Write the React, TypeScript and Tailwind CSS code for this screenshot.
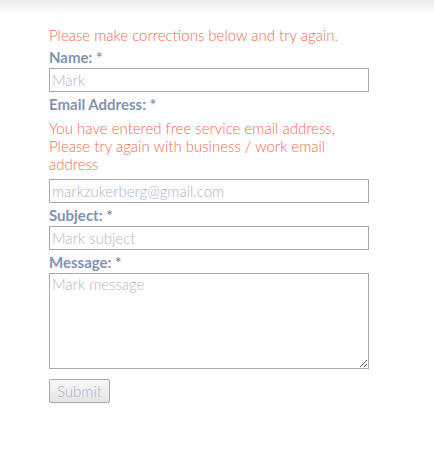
import React from "react";

export default function App() {
  const label = "text-[15px] font-bold text-[#8192b3] leading-[18px] h-[18px]";
  const input =
    "block w-[320px] h-[24px] border border-[#a9a9a9] bg-white px-[2px] text-[15px] font-light text-[#a8b3cf] placeholder:text-[#adb8d3] outline-none";
  return (
    <div className="w-[434px] h-[454px] bg-white relative" style={{ fontFamily: "Lato, 'Noto Sans', sans-serif" }}>
      <div className="absolute top-0 left-0 right-0 h-[14px] bg-gradient-to-b from-[#ececec] to-white" />
      <div className="relative pl-[49px] pt-[26px] flex flex-col">
        <p className="text-[15px] font-light leading-[18px] text-[#f36b52]">Please make corrections below and try again.</p>
        <div className={`${label} mt-[4px]`}>Name: *</div>
        <input className={`${input} mt-[2px]`} placeholder="Mark" />
        <div className={`${label} mt-[3px]`}>Email Address: *</div>
        <p className="text-[15px] font-light leading-[18px] text-[#f36b52] w-[320px] mt-[6px]">
          You have entered free service email address, Please try again with business / work email address
        </p>
        <input className={`${input} mt-[6px]`} defaultValue="markzukerberg@gmail.com" />
        <div className={`${label} mt-[3px]`}>Subject: *</div>
        <input className={`${input} mt-[2px]`} placeholder="Mark subject" />
        <div className={`${label} mt-[3px]`}>Message: *</div>
        <textarea
          className="block w-[320px] h-[96px] mt-[2px] border border-[#a9a9a9] bg-white px-[2px] py-[1px] text-[15px] leading-[19px] font-light text-[#a8b3cf] placeholder:text-[#adb8d3] outline-none resize-y"
          placeholder="Mark message"
        />
        <div className="mt-[10px]">
          <button className="h-[24px] px-[7px] border border-[#a9a9a9] rounded-[2px] bg-gradient-to-b from-[#f8f8f8] to-[#e4e4e4] text-[15px] font-light text-[#a8b3cf] leading-[20px]">
            Submit
          </button>
        </div>
      </div>
    </div>
  );
}
